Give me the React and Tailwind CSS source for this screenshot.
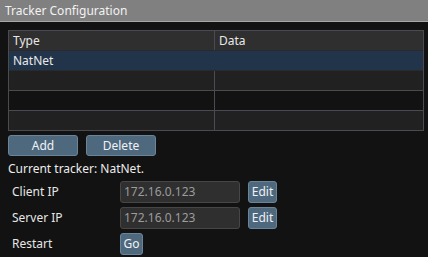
import React from "react";

const rows = [
  { type: "NatNet", data: "", bg: "bg-[#22344a]" },
  { type: "", data: "", bg: "bg-[#212121]" },
  { type: "", data: "", bg: "bg-[#121212]" },
  { type: "", data: "", bg: "bg-[#212121]" },
];

const Btn = ({ children, className = "" }) => (
  <button
    className={`h-[21px] bg-[#4e687e] border border-[#6a8499] rounded-[3px] text-[12px] leading-none text-[#eef2f5] ${className}`}
  >
    {children}
  </button>
);

const IpRow = ({ label, value }) => (
  <div className="flex items-center h-[22px]">
    <span className="w-[112px] pl-[4px] text-[12px] text-[#e6e6e6]">{label}</span>
    <div className="w-[120px] h-[22px] bg-[#2f2f2f] border border-[#464646] rounded-[3px] px-[3px] text-[12px] leading-[20px] text-[#9c9c9c]">
      {value}
    </div>
    <Btn className="ml-[8px] w-[29px] h-[22px]">Edit</Btn>
  </div>
);

export default function App() {
  return (
    <div className="w-[428px] h-[257px] bg-[#121212] overflow-hidden" style={{ fontFamily: '"Noto Sans", "Open Sans", sans-serif' }}>
      <div className="h-[22px] bg-[#808080] border-b border-[#a8a8a8] px-[5px] text-[12px] leading-[21px] text-[#f2f2f2]">
        Tracker Configuration
      </div>
      <div className="pt-[8px] pl-[8px] pr-[4px]">
        <div className="border border-[#4a4a50] w-[416px]">
          <div className="flex h-[19px] bg-[#2f2f2f] text-[12px] leading-[19px] text-[#e8e8e8]">
            <div className="w-[206px] pl-[4px] border-r border-[#4a4a50]">Type</div>
            <div className="flex-1 pl-[4px]">Data</div>
          </div>
          {rows.map((r, i) => (
            <div
              key={i}
              className={`flex h-[20px] ${r.bg} text-[12px] leading-[19px] text-[#e8e8e8] ${i > 1 ? "border-t border-[#4a4a50]" : "border-t border-[#2a2a2e]"}`}
            >
              <div className={`w-[206px] pl-[4px] ${i > 0 ? "border-r border-[#4a4a50]" : ""}`}>{r.type}</div>
              <div className="flex-1 pl-[4px]">{r.data}</div>
            </div>
          ))}
        </div>
        <div className="flex gap-[8px] mt-[4px]">
          <Btn className="w-[70px]">Add</Btn>
          <Btn className="w-[70px]">Delete</Btn>
        </div>
        <div className="mt-[3px] text-[12px] leading-[20px] text-[#ececec]">Current tracker: NatNet.</div>
        <div className="flex flex-col gap-[4px] mt-[2px]">
          <IpRow label="Client IP" value="172.16.0.123" />
          <IpRow label="Server IP" value="172.16.0.123" />
          <div className="flex items-center h-[22px]">
            <span className="w-[112px] pl-[4px] text-[12px] text-[#e6e6e6]">Restart</span>
            <Btn className="w-[23px] h-[22px]">Go</Btn>
          </div>
        </div>
      </div>
    </div>
  );
}
